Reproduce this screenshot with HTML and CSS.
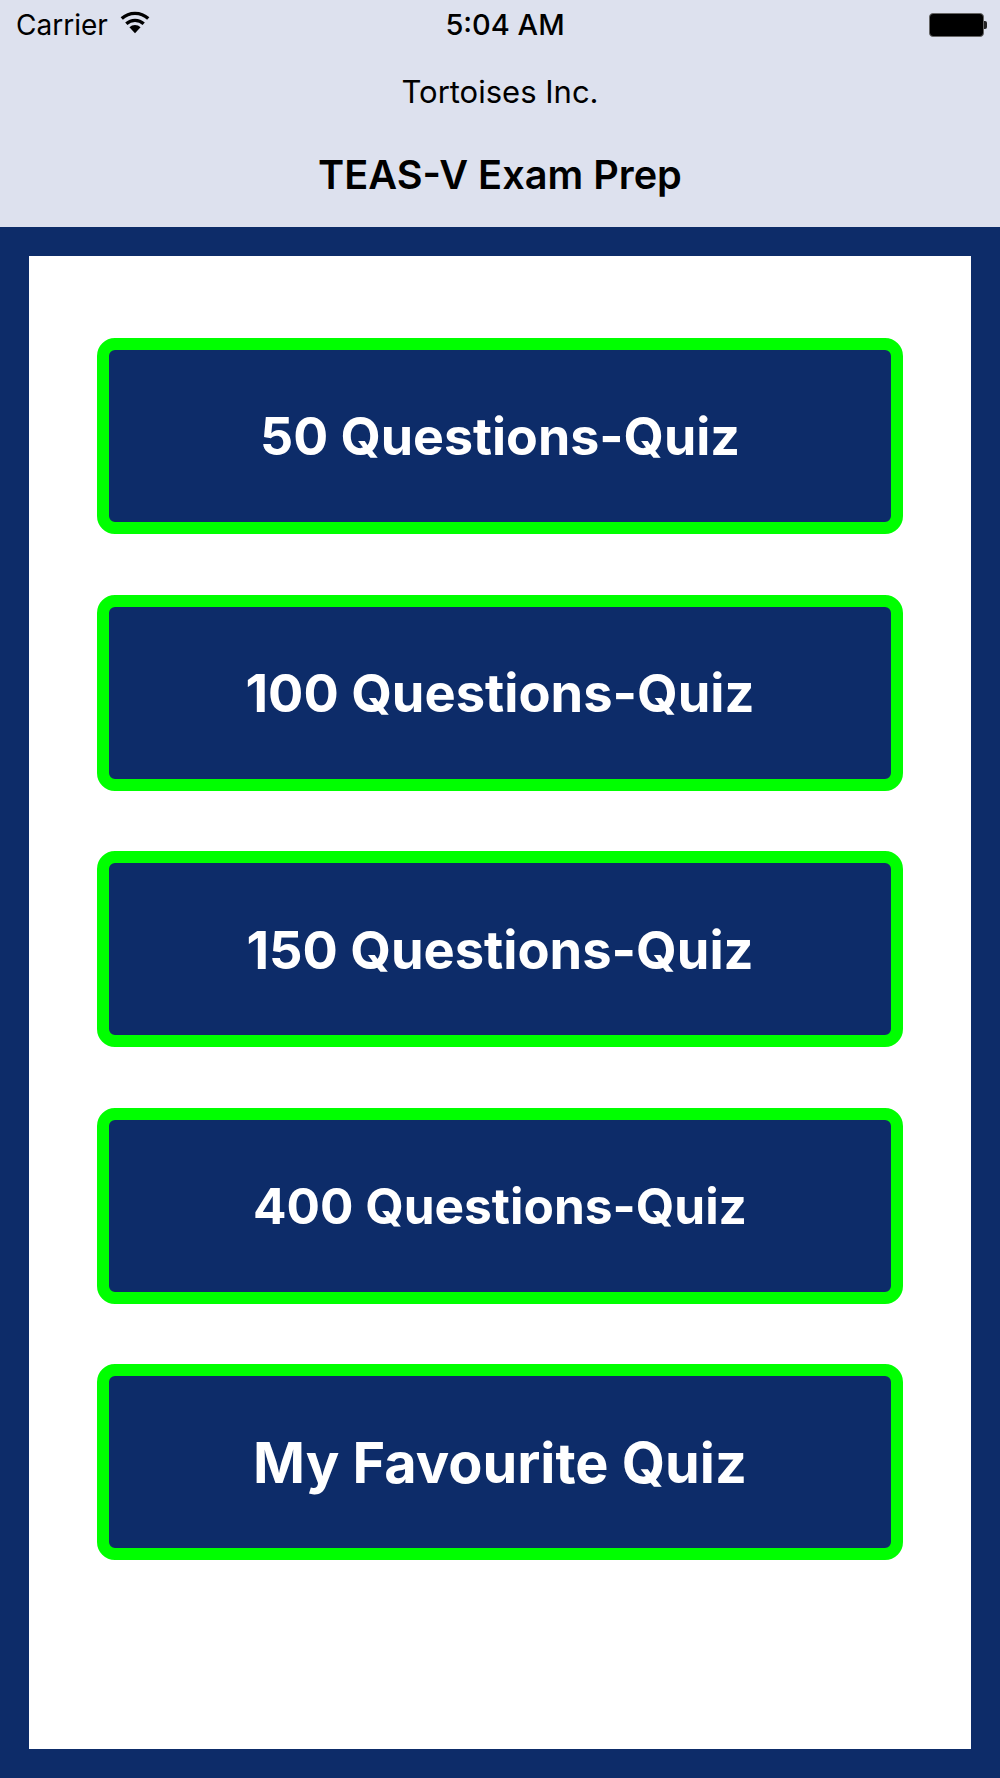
FILE: index.html
```html
<!DOCTYPE html>
<html lang="en">
<head>
<meta charset="utf-8">
<title>TEAS-V Exam Prep</title>
<link rel="stylesheet" href="styles.css">
</head>
<body>
<header class="top">
  <div class="status">
    <div class="status-left">
      <span class="carrier">Carrier</span>
      <svg class="wifi" width="30" height="23" viewBox="0.5 0 29 22"><path d="M15 21.5 9.6 15.6a8 8 0 0 1 10.8 0Z" fill="#000"/><path d="M6.6 12.2a12.4 12.4 0 0 1 16.8 0M2.2 7.2a18.8 18.8 0 0 1 25.6 0" fill="none" stroke="#000" stroke-width="3.2"/></svg>
    </div>
    <span class="time">5:04 AM</span>
    <div class="battery"><span class="battery-body"></span><span class="battery-tip"></span></div>
  </div>
  <div class="company">Tortoises Inc.</div>
  <h1 class="title">TEAS-V Exam Prep</h1>
</header>
<main class="frame">
  <section class="card">
    <button class="quiz quiz-50">50 Questions-Quiz</button>
    <button class="quiz quiz-100">100 Questions-Quiz</button>
    <button class="quiz quiz-150">150 Questions-Quiz</button>
    <button class="quiz quiz-400">400 Questions-Quiz</button>
    <button class="quiz quiz-fav">My Favourite Quiz</button>
  </section>
</main>
</body>
</html>
```
FILE: styles.css
```css
* { box-sizing: border-box; }
html, body { margin: 0; padding: 0; }
body {
  width: 1000px;
  height: 1778px;
  display: flex;
  flex-direction: column;
  font-family: Inter, "Liberation Sans", sans-serif;
  background: #0d2c69;
  overflow: hidden;
}
.top {
  height: 227px;
  flex: none;
  background: #dde1ee;
  color: #000;
  display: flex;
  flex-direction: column;
  align-items: center;
}
.status {
  width: 100%;
  height: 50px;
  padding: 0 13px 0 16px;
  display: flex;
  align-items: center;
  justify-content: space-between;
  position: relative;
}
.status-left { display: flex; align-items: center; gap: 12px; }
.carrier { font-size: 28px; line-height: 50px; }
.wifi { display: block; margin-top: -5px; }
.time {
  position: absolute;
  left: 10px;
  right: 0;
  text-align: center;
  font-size: 29px;
  font-weight: 500;
  line-height: 50px;
}
.battery { display: flex; align-items: center; margin-top: -1px; }
.battery-body {
  width: 55px;
  height: 24px;
  background: #000;
  border: 1.5px solid #666;
  border-radius: 4px;
}
.battery-tip {
  width: 3px;
  height: 8px;
  background: #222;
  border-radius: 0 2px 2px 0;
}
.company {
  margin-top: 28px;
  font-size: 31px;
  line-height: 28px;
  font-weight: 400;
}
.title {
  margin: 47px 0 0;
  font-size: 39.7px;
  line-height: 44px;
  font-weight: 600;
}
.frame {
  flex: 1;
  padding: 29px 29px 29.5px;
  display: flex;
}
.card {
  flex: 1;
  background: #fff;
  padding: 82px 68px 0;
  display: flex;
  flex-direction: column;
  gap: 60.5px;
}
.quiz {
  height: 196px;
  flex: none;
  width: 100%;
  background: #0d2c69;
  border: 12px solid #00ff00;
  border-radius: 18px;
  color: #fff;
  font-family: inherit;
  font-weight: 700;
  padding: 1px 0 0;
}
.quiz-50 { font-size: 51.9px; }
.quiz-100 { font-size: 52.4px; }
.quiz-150 { font-size: 52.4px; }
.quiz-400 { font-size: 49.6px; }
.quiz-fav { font-size: 55.8px; }
```
